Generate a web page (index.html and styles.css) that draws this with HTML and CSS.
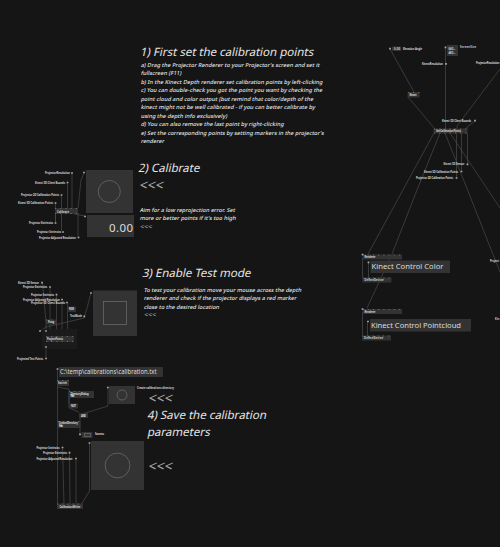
FILE: index.html
```html
<!DOCTYPE html>
<html lang="en">
<head>
<meta charset="utf-8">
<title>Projector calibration patch</title>
<link rel="stylesheet" href="styles.css">
</head>
<body>
<main class="canvas">
<svg class="graph" width="500" height="547" viewBox="0 0 500 547">
  <!-- links -->
  <g class="links">
    <path d="M72 173V208M67.500 183V208M61.500 196V208M55.500 204V222M61.500 213V231M78 213V237"/>
    <path d="M78 208L81 180L84 173M70 213L85 216M55.500 213V222"/>
    <path d="M42.500 283L46 322M50 287V337M56.500 295V337M62 300V337M67.500 303V337M46 322V340M46 341V358M40 331L46 327L84 318L87 308L91 293"/>
    <path d="M57.500 369V505M57 387L69 389V408L79 412M69 392V404M108 388V406L82 414M80 416V434"/>
    <path d="M62.500 447L64 505M69.500 453L70 505M76 459V505M89.500 443V491L81 505"/>
    <path d="M390 49L414 92M408 97L435 129M445.500 48V129M500 69L457 126V129M475 121L467 127V129"/>
    <path d="M434 133L368 254M440 133L417 190L392 254L367 308M445 133L500 272M450 133L500 208M456.500 133V178M461.500 133V172M467.500 133V165"/>
    <path d="M362.500 258V277M368.500 262V278M362.500 312V335M367.500 321V336"/>
  </g>
  <!-- node bodies -->
  <g class="nodes">
    <rect x="42" y="329" width="35" height="20" class="soft"/>
    <rect x="86" y="170" width="47" height="43"/><rect x="87" y="215" width="47" height="22"/>
    <rect x="55" y="208" width="23" height="6"/>
    <rect x="93" y="290.500" width="44" height="45.500"/>
    <rect x="67" y="306.500" width="9" height="5.500"/><rect x="46" y="319.500" width="10" height="5"/><rect x="46" y="336" width="28" height="6"/>
    <rect x="59" y="367" width="104" height="10"/><rect x="57" y="380" width="12" height="6"/>
    <rect x="69" y="391" width="25" height="7"/><rect x="69" y="403.500" width="9" height="5"/><rect x="79" y="413" width="9" height="5"/>
    <rect x="57.500" y="421" width="23" height="7"/><rect x="81.500" y="432" width="11" height="6"/>
    <rect x="109" y="386" width="26" height="18"/><rect x="91" y="441" width="53" height="49"/>
    <rect x="57" y="503.500" width="26" height="5.500"/>
    <rect x="392" y="46.500" width="9" height="4.500"/><rect x="447" y="45" width="11" height="11"/>
    <rect x="407.500" y="92" width="12" height="5.500"/><rect x="433.500" y="128.500" width="34" height="5"/>
    <rect x="362.500" y="254.500" width="39.500" height="5"/><rect x="370.500" y="260.500" width="79.500" height="12.500"/><rect x="362.500" y="277.500" width="29" height="5"/>
    <rect x="362.500" y="309" width="39.500" height="5"/><rect x="370" y="319" width="101" height="12.500"/><rect x="362" y="335.500" width="29" height="5"/>
  </g>
  <g class="shapes">
    <circle cx="109.300" cy="191.500" r="11"/><rect x="103.500" y="301.500" width="23" height="23"/>
    <circle cx="122" cy="395" r="5"/><circle cx="117.500" cy="465.500" r="12.400"/><rect x="84.500" y="433.500" width="6" height="3"/>
  </g>
  <path class="ports" d="M55 208.500H78M55 213.500H78M46 336.500H74M46 341.500H74M57 504H83M57.500 421.500H81M434 129H468M434 133H468M362.500 255H402M362.500 278H392M362.500 309.500H402M362 336H391M57 380.500H69M69 391.500H80M408 92.500H420M46 320H56"/>
  <!-- pins -->
  <g class="pins">
    <path d="M72 173h.01M67.500 182.500h.01M61.500 195h.01M55.500 203h.01M55.500 223h.01M63 232h.01M78.500 237.500h.01M84 172.500h.01M85 216.500h.01"/>
    <path d="M42 282.700h.01M50 287h.01M56.500 294.700h.01M62 299.500h.01M67 302.500h.01M84.300 316.300h.01M91 293h.01M40 331h.01M46 331h.01M46 347h.01M46 358.500h.01"/>
    <path d="M57.500 369h.01M107.800 387.500h.01M80 434.300h.01M62.500 447.500h.01M69.500 452.700h.01M76 458.500h.01M89.500 443h.01"/>
    <path d="M390 48.700h.01M445.500 47.300h.01M446 63.800h.01M475 120.700h.01M467.500 164.300h.01M461.500 171.500h.01M456.500 178h.01M362.500 254.500h.01M368.500 262.300h.01M362.500 309h.01M368 321.500h.01"/>
  </g>
  <!-- labels -->
  <g class="labels">
    <text x="45" y="174" textLength="25">ProjectorResolution</text>
    <text x="35" y="183.500" textLength="30">Kinect 3D Client Bounds</text>
    <text x="21" y="196" textLength="38">Projector 2D Calibration Points</text>
    <text x="18" y="204" textLength="35">Kinect 3D Calibration Points</text>
    <text x="57" y="212.500" textLength="12">Calibrate</text>
    <text x="29" y="224" textLength="24">Projector Extrinsics</text>
    <text x="37" y="233" textLength="24">Projector Intrinsics</text>
    <text x="39" y="238.500" textLength="37">Projector Adjusted Resolution</text>
    <text x="18" y="284" textLength="21">Kinect 3D Sensor</text>
    <text x="23" y="288.300" textLength="24">Projector Extrinsics</text>
    <text x="31" y="296" textLength="23">Projector Intrinsics</text>
    <text x="23" y="300.500" textLength="37">Projector Adjusted Resolution</text>
    <text x="31" y="304" textLength="34">Projector 3D Client Bounds</text>
    <text x="69" y="310" textLength="5">RGB</text>
    <text x="70" y="317.300" textLength="12">TestMode</text>
    <text x="48" y="323" textLength="6">Pong</text>
    <text x="47" y="339.700" textLength="16">ProjectPoints</text>
    <text x="17" y="359.500" textLength="26">Projected Test Points</text>
    <text x="58" y="384.300" textLength="9">Switch</text>
    <text x="70.500" y="394.500" textLength="18">DirectoryDialog</text><text x="70.500" y="397.200" textLength="4">Path</text>
    <text x="71" y="407" textLength="5">NOT</text><text x="81" y="416.500" textLength="5">AND</text>
    <text x="137" y="388.500" textLength="37">Create calibrations directory</text>
    <text x="59" y="424.300" textLength="19">CreateDirectory</text><text x="59" y="427" textLength="4">Path</text>
    <text x="95" y="435.200" textLength="9">Success</text>
    <text x="36.500" y="448.500" textLength="23">Projector Intrinsics</text>
    <text x="43" y="453.700" textLength="24">Projector Extrinsics</text>
    <text x="36.500" y="459.500" textLength="36">Projector Adjusted Resolution</text>
    <text x="59.500" y="507.500" textLength="21">CalibrationWriter</text>
    <text x="394" y="49.700" textLength="6">0.00</text><text x="403" y="49.500" textLength="19">Elevation Angle</text>
    <text x="448.500" y="49.500" textLength="7">640...</text><text x="448.500" y="54.300" textLength="7">480...</text>
    <text x="460" y="48.300" textLength="16">ScreenSize</text>
    <text x="422" y="64.500" textLength="21">KinectResolution</text>
    <text x="476" y="64" textLength="23.500">ProjectorResolution</text>
    <text x="409.500" y="96" textLength="7">Kinect</text>
    <text x="442" y="121.700" textLength="29">Kinect 3D Client Bounds</text>
    <text x="436" y="132.300" textLength="25">GetCalibrationPoints</text>
    <text x="443.500" y="165.200" textLength="21">Kinect 3D Sensor</text>
    <text x="424" y="172.500" textLength="34">Kinect 3D Calibration Points</text>
    <text x="416" y="179" textLength="37">Projector 2D Calibration Points</text>
    <text x="364.500" y="258" textLength="11">Renderer</text><text x="364.500" y="280.700" textLength="19">DefineDevice</text>
    <text x="364.500" y="312.500" textLength="11">Renderer</text><text x="364" y="339" textLength="19">DefineDevice</text>
    <text x="490" y="262" textLength="9">Project</text>
    <text x="495" y="319.500" textLength="4.500">Kin</text>
  </g>
  <g class="values">
    <text x="109" y="232" textLength="24" class="number">0.00</text>
    <text x="60" y="374" textLength="96.500" lengthAdjust="spacingAndGlyphs" class="path">C:\temp\calibrations\calibration.txt</text>
    <text x="371.500" y="268.500" textLength="72" class="title">Kinect Control Color</text>
    <text x="371" y="327.500" textLength="90" class="title">Kinect Control Pointcloud</text>
  </g>
</svg>

<section class="note note-points">
  <h2>1) First set the calibration points</h2>
  <p><span>a) Drag the Projector Renderer to your Projector's screen and set it</span><span>fullscreen (F11)</span><span>b) In the Kinect Depth renderer set calibration points by left-clicking</span><span>c) You can double-check you got the point you want by checking the</span><span>point cloud and color output (but remind that color/depth of the</span><span>kinect might not be well calibrated - if you can better calibrate by</span><span>using the depth info exclusively)</span><span>d) You can also remove the last point by right-clicking</span><span>e) Set the corresponding points by setting markers in the projector's</span><span>renderer</span></p>
</section>
<section class="note note-calibrate">
  <h2>2) Calibrate</h2>
  <div class="arrows">&lt;&lt;&lt;</div>
  <p><span>Aim for a low reprojection error. Set</span><span>more or better points if it's too high</span><span class="small-arrows">&lt;&lt;&lt;</span></p>
</section>
<section class="note note-test">
  <h2>3) Enable Test mode</h2>
  <p><span>To test your calibration move your mouse across the depth</span><span>renderer and check if the projector displays a red marker</span><span>close to the desired location</span><span class="small-arrows">&lt;&lt;&lt;</span></p>
</section>
<section class="note note-save">
  <div class="arrows">&lt;&lt;&lt;</div>
  <h2><span>4) Save the calibration</span><span>parameters</span></h2>
  <div class="arrows last">&lt;&lt;&lt;</div>
</section>
</main>
</body>
</html>
```
FILE: styles.css
```css
body { margin: 0; background: #151515; color: #e6e6e6; font-family: "Noto Sans", "Open Sans", sans-serif; }
.canvas { position: relative; width: 500px; height: 547px; overflow: hidden; }
.graph { display: block; }
.links path { fill: none; stroke: #4b4b4b; stroke-width: .7; }
.nodes rect { fill: #333; }
.nodes .soft { fill: #1b1b1b; }
.shapes * { fill: none; stroke: #686868; stroke-width: .8; }
.ports { fill: none; stroke: #777; stroke-width: .8; stroke-dasharray: 1.2 4; }
.pins path { stroke: #aaa; stroke-width: 1.7; stroke-linecap: square; }
.labels { fill: #e4e4e4; font-size: 2.6px; font-weight: 600; }
.values { fill: #ddd; }
.number { font-size: 11.5px; }
.path { font-size: 6.7px; }
.title { font-size: 7.6px; }
.note { position: absolute; white-space: nowrap; }
.note h2 { margin: 0; font-size: 11.5px; font-weight: 400; line-height: 17px; }
.note-points h2, .note-calibrate h2, .note-test h2 { transform: skewX(-12deg); }
.note p { margin: 0; font-size: 5.5px; font-weight: 500; line-height: 8.48px; letter-spacing: .055px; }
.note span { display: block; transform: skewX(-12deg); }
.note .arrows { margin-left: 1px; color: #aaa; font-size: 14px; line-height: 17px; transform: skewX(-12deg); }
.note .small-arrows { color: #aaa; font-size: 7px; }
.note-points { left: 141px; top: 43px; }
.note-points p { margin-top: 1px; }
.note-calibrate { left: 139px; top: 159px; }
.note-calibrate p { margin: 13px 0 0 1px; }
.note-test { left: 143px; top: 264px; }
.note-test p { margin: 5px 0 0 1px; }
.note-save { left: 148px; top: 389px; }
.note-save .last { margin-top: 17px; }
```
